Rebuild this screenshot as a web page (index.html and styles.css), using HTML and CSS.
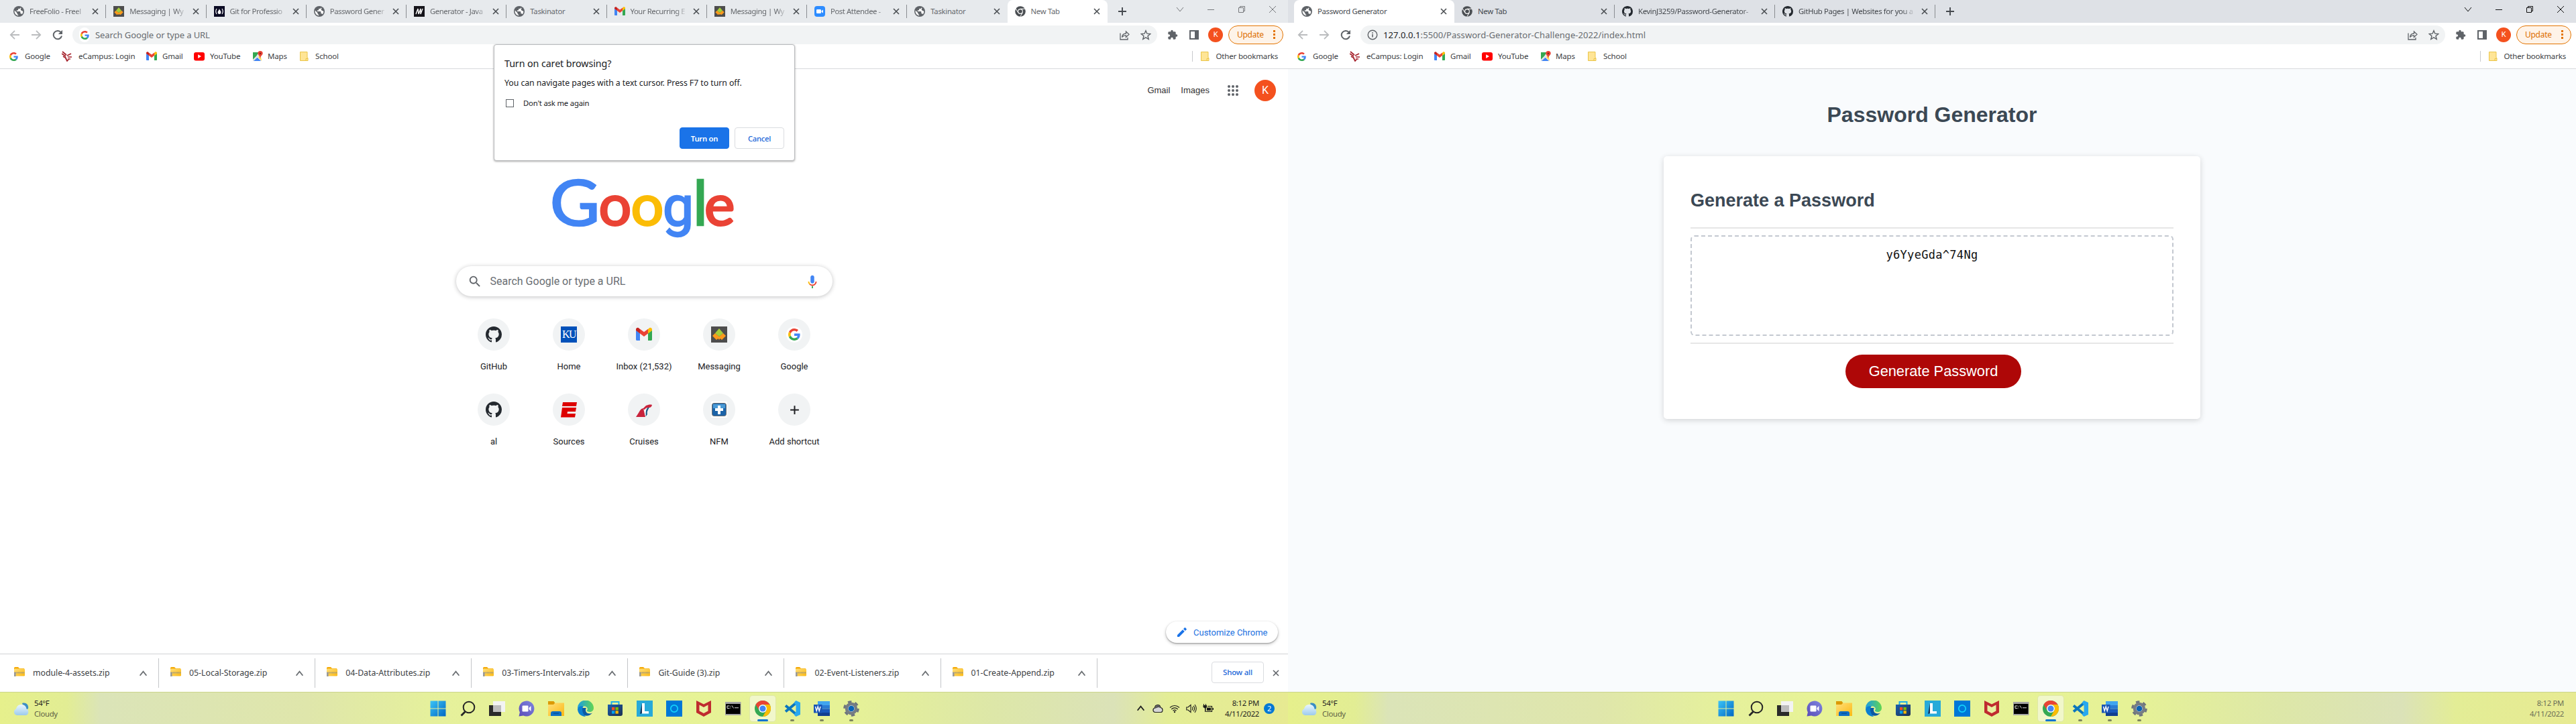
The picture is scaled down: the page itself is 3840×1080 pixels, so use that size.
FILE: index.html
```html
<!DOCTYPE html>
<html lang="en">
<head>
<meta charset="utf-8">
<title>Desktop</title>
<link rel="stylesheet" href="styles.css">
</head>
<body>
<svg class="defs" width="0" height="0" aria-hidden="true">
  <defs>
    <linearGradient id="gw" x1="0" y1="0" x2="1" y2="1"><stop offset="0" stop-color="#3cc4f7"/><stop offset="1" stop-color="#0067c5"/></linearGradient>
    <linearGradient id="gf" x1="0" y1="0" x2="1" y2="1"><stop offset="0" stop-color="#ffdf7a"/><stop offset="1" stop-color="#fbb914"/></linearGradient>
    <linearGradient id="gp" x1="1" y1="0" x2="0" y2="1"><stop offset="0" stop-color="#7f86e0"/><stop offset="1" stop-color="#5a4bb8"/></linearGradient>
    <linearGradient id="gs" x1="0" y1="0" x2="1" y2="1"><stop offset="0" stop-color="#1a5fae"/><stop offset="1" stop-color="#1d3050"/></linearGradient>
    <linearGradient id="ge" x1="0" y1="0" x2="1" y2="0"><stop offset="0" stop-color="#1b9de2"/><stop offset="1" stop-color="#62d651"/></linearGradient>
    <linearGradient id="gc" x1="0" y1="0" x2="0" y2="1"><stop offset="0" stop-color="#eaf6ff"/><stop offset="1" stop-color="#9ccbec"/></linearGradient>
  </defs>
  <symbol id="globe" viewBox="2 2 20 20"><circle cx="12" cy="12" r="10" fill="#5f6368"/><path fill="#fff" d="M11 19.9C7 19.400 4 16 4 12c0-.6.1-1.200.2-1.800L9 15v1c0 1.100.9 2 2 2zM17.900 17.400c-.3-.8-1-1.400-1.900-1.400h-1v-3c0-.5-.4-1-1-1H8v-2h2c.6 0 1-.4 1-1V7h2c1.100 0 2-.9 2-2l1.500.7c-1 2-1.500 3-.5 4s3 1 3.900 2.300c0 2-.8 4-2 5.400z"/></symbol>
  <symbol id="github" viewBox="0 0 16 16"><path fill="#24292f" d="M8 0C3.580 0 0 3.580 0 8c0 3.540 2.290 6.530 5.470 7.590.4.07.55-.17.55-.38 0-.19-.01-.82-.01-1.490-2.010.37-2.530-.49-2.690-.94-.09-.23-.48-.94-.82-1.130-.28-.15-.68-.52-.01-.53.63-.01 1.080.58 1.230.82.72 1.210 1.870.87 2.330.66.07-.52.28-.87.51-1.070-1.780-.2-3.640-.89-3.640-3.950 0-.87.31-1.590.82-2.150-.08-.2-.36-1.020.08-2.120 0 0 .67-.21 2.200.82.64-.18 1.320-.27 2-.27s1.360.09 2 .27c1.530-1.040 2.200-.82 2.200-.82.44 1.100.16 1.920.08 2.120.51.56.82 1.270.82 2.150 0 3.070-1.870 3.750-3.650 3.950.29.25.54.73.54 1.480 0 1.070-.01 1.930-.01 2.200 0 .21.15.46.55.38A8.010 8.010 0 0016 8c0-4.420-3.580-8-8-8z"/></symbol>
  <symbol id="google" viewBox="0 0 48 48"><path fill="#EA4335" d="M24 9.500c3.540 0 6.710 1.220 9.210 3.600l6.850-6.850C35.900 2.380 30.470 0 24 0 14.620 0 6.510 5.380 2.560 13.220l7.980 6.190C12.430 13.720 17.740 9.500 24 9.500z"/><path fill="#4285F4" d="M46.980 24.550c0-1.570-.15-3.090-.38-4.550H24v9.020h12.940c-.58 2.960-2.260 5.480-4.780 7.180l7.730 6c4.510-4.180 7.090-10.360 7.090-17.650z"/><path fill="#FBBC05" d="M10.530 28.590c-.48-1.450-.76-2.990-.76-4.590s.27-3.140.76-4.590l-7.980-6.190C.92 16.460 0 20.120 0 24s.92 7.540 2.560 10.780l7.970-6.190z"/><path fill="#34A853" d="M24 48c6.480 0 11.930-2.130 15.890-5.810l-7.730-6c-2.150 1.450-4.920 2.300-8.160 2.300-6.260 0-11.570-4.220-13.470-9.910l-7.980 6.190C6.510 42.620 14.620 48 24 48z"/></symbol>
  <symbol id="gmail" viewBox="0 0 24 24"><path fill="#4285f4" d="M1.500 21H6V10L0 5.800v13.700c0 .8.700 1.500 1.500 1.500z"/><path fill="#34a853" d="M18 21h4.500c.8 0 1.500-.7 1.500-1.500V5.800L18 10z"/><path fill="#fbbc04" d="M18 4v6.500l6-4.500V4.500C24 2.300 21.400 1 19.600 2.400z"/><path fill="#ea4335" d="M6 10.500V3.800l6 4.500 6-4.500v6.700L12 15z"/><path fill="#c5221f" d="M0 4.500V6l6 4.500V4L4.400 2.400C2.600 1 0 2.300 0 4.500z"/></symbol>
  <symbol id="wyzant" viewBox="0 0 24 24"><path fill="#4d4d4d" d="M0 0h24v24H0z"/><path fill="#fb9a1c" d="M2 14l4-4 6 5 6-5 4 4-6 6-2.500-2L12 20l-1.500-2L8 20z"/><path fill="#a6ce39" d="M12 3l6 7-6 5-6-5z"/></symbol>
  <symbol id="fcc" viewBox="0 0 16 16"><path fill="#0a0a23" d="M0 0h16v16H0z"/><path d="M4 4Q1.500 8 4 12M12 4q2.500 4 0 8" fill="none" stroke="#fff" stroke-width="1.200"/><path fill="#fff" d="M8 4c0 2 2.500 3 2.500 5.500Q10.300 12 8 12t-2.500-2.500C5.500 8 7 7 8 4z"/></symbol>
  <symbol id="mdn" viewBox="0 0 16 16"><path fill="#15141a" d="M0 0h16v16H0z"/><path d="M3 12L6 4l1 8 3-8v8l3-8" fill="none" stroke="#fff" stroke-width="1.400"/></symbol>
  <symbol id="zoomcam" viewBox="0 0 16 16"><rect width="16" height="16" rx="4" fill="#2d8cff"/><rect x="3" y="5" width="7" height="6" rx="1.300" fill="#fff"/><path fill="#fff" d="M10.600 7.200L13 5.500v5l-2.400-1.700z"/></symbol>
  <symbol id="chromegray" viewBox="0 0 16 16"><circle cx="8" cy="8" r="7.800" fill="#4a4e52"/><circle cx="8" cy="8" r="3.900" fill="#fff"/><circle cx="8" cy="8" r="2.800" fill="#4a4e52"/><path d="M8 4.200h7M4.700 9.900L1.300 4M11.300 9.900L8 15.600" stroke="#fff"/></symbol>
  <symbol id="chrome" viewBox="0 0 24 24"><circle cx="12" cy="12" r="12" fill="#34a853"/><path fill="#ea4335" d="M1.600 6A12 12 0 0122.400 6H12a6 6 0 00-5.200 9z"/><path fill="#fbbc05" d="M22.400 6A12 12 0 0112 24l5.200-9A6 6 0 0012 6z"/><circle cx="12" cy="12" r="6" fill="#fff"/><circle cx="12" cy="12" r="4.600" fill="#4285f4"/></symbol>
  <symbol id="x" viewBox="0 0 16 16"><path d="M4 4l8 8M12 4l-8 8" stroke="currentColor" stroke-width="1.600"/></symbol>
  <symbol id="plus" viewBox="0 0 16 16"><path d="M8 2v12M2 8h12" stroke="currentColor" stroke-width="1.900"/></symbol>
  <symbol id="back" viewBox="0 0 16 16"><path d="M15 8H2M8 1.800L1.800 8 8 14.200" fill="none" stroke="#babcbe" stroke-width="1.800"/></symbol>
  <symbol id="fwd" viewBox="0 0 16 16"><path d="M1 8h13M8 1.800L14.200 8 8 14.200" fill="none" stroke="#babcbe" stroke-width="1.800"/></symbol>
  <symbol id="reload" viewBox="0 0 16 16"><path d="M13 4.500A6.200 6.200 0 1014 9.500" fill="none" stroke="#5f6368" stroke-width="2"/><path fill="#5f6368" d="M15 .8v6.200H8.800z"/></symbol>
  <symbol id="info" viewBox="0 0 16 16"><circle cx="8" cy="8" r="6.800" fill="none" stroke="#5f6368" stroke-width="1.400"/><path d="M8 7v4.500M8 4.300v1.600" stroke="#5f6368" stroke-width="1.600"/></symbol>
  <symbol id="share" viewBox="0 0 16 16"><path d="M2 5.500v9.500h11v-3M4.500 11.500C5 7.500 7.500 6 10.500 6V3l4.500 4.300-4.500 4.200V8.800c-3 0-4.700.9-6 2.700z" fill="none" stroke="#5f6368" stroke-width="1.300"/></symbol>
  <symbol id="star" viewBox="0 0 16 16"><path d="M8 1.700l1.900 4.500 4.800.4-3.700 3.100 1.200 4.800L8 11.900l-4.200 2.600L5 9.700 1.300 6.600l4.800-.4z" fill="none" stroke="#5f6368" stroke-width="1.400"/></symbol>
  <symbol id="puzzle" viewBox="0 0 24 24"><path fill="#5f6368" d="M20.500 11H19V7c0-1.100-.9-2-2-2h-4V3.500a2.500 2.500 0 00-5 0V5H4c-1.100 0-2 .9-2 2v3.800h1.500a2.700 2.700 0 010 5.400H2V20c0 1.100.9 2 2 2h3.800v-1.500a2.700 2.700 0 015.400 0V22H17c1.100 0 2-.9 2-2v-4h1.500a2.500 2.500 0 000-5z"/></symbol>
  <symbol id="panel" viewBox="0 0 16 16"><path fill="#5f6368" fill-rule="evenodd" d="M1 1h14v14H1zM3 3v10h6V3z"/></symbol>
  <symbol id="eagle" viewBox="0 0 16 16"><path d="M1 1l6 5M0 4l6 4M2 8l5 3M8 7l6-3M9 9h6M9 12h4M5 9l3 6 2-2" fill="none" stroke="#a5222c" stroke-width="1.700"/></symbol>
  <symbol id="youtube" viewBox="0 0 16 16"><rect x="0" y="2" width="16" height="12.500" rx="3" fill="#f00"/><path fill="#fff" d="M6.200 5.300v5.600L11 8.100z"/></symbol>
  <symbol id="maps" viewBox="0 0 16 16"><path fill="#34a853" d="M1 2h9l-4 6-5 5z"/><path fill="#fbd75b" d="M10 6l3 3 1 6-5-5z"/><path fill="#4285f4" d="M1 15l6-6 6 6z"/><path fill="#dfe3e6" d="M1 13L11 3l2 2-11 10H1z"/><path fill="#ea4335" d="M12 0a3.700 3.700 0 013.700 3.700C15.700 6 12.500 7 12 11 11.500 7 8.300 6 8.300 3.700A3.700 3.700 0 0112 0z"/><circle cx="12" cy="3.700" r="1.300" fill="#8c1d18"/></symbol>
  <symbol id="folder" viewBox="0 0 16 16"><path d="M2.500 1.500h10.500v9h1v4H2.500z" fill="#ffe596" stroke="#eac54a"/><path d="M11 14.500v-3h2.500" fill="none" stroke="#eac54a"/></symbol>
  <symbol id="wmin" viewBox="0 0 12 12"><path d="M1 6.500h10" stroke="currentColor"/></symbol>
  <symbol id="wres" viewBox="0 0 12 12"><path d="M1.500 3.500h7v7h-7zM3.500 3.500v-2h7v7h-2" fill="none" stroke="currentColor"/></symbol>
  <symbol id="wx" viewBox="0 0 12 12"><path d="M1 1l10 10M11 1L1 11" stroke="currentColor"/></symbol>
  <symbol id="wchev" viewBox="0 0 12 12"><path d="M1 3l5 6 5-6" fill="none" stroke="currentColor"/></symbol>
  <symbol id="up" viewBox="0 0 12 12"><path d="M1.500 9L6 3.500 10.500 9" fill="none" stroke="currentColor" stroke-width="1.700"/></symbol>
  <symbol id="zip" viewBox="0 0 18 16"><path fill="#f5ab0a" d="M1 2.500Q1 1 2.500 1H7l2 2h7v4H1z"/><rect x="1" y="3.500" width="16" height="11" rx="1.200" fill="url(#gf)"/><path d="M1 9.500h15.500" stroke="#97917c" stroke-width="2.200" stroke-dasharray="1.200 .8"/><path fill="#9a9a98" d="M1 9h2.600v6H1z"/></symbol>
  <symbol id="search" viewBox="0 0 24 24"><path fill="currentColor" d="M15.500 14h-.79l-.28-.27A6.470 6.470 0 0016 9.500 6.500 6.500 0 109.500 16c1.610 0 3.090-.59 4.230-1.570l.27.28v.79l5 4.990L20.490 19l-4.990-5zm-6 0C7.010 14 5 11.990 5 9.500S7.010 5 9.500 5 14 7.010 14 9.500 11.990 14 9.500 14z"/></symbol>
  <symbol id="mic" viewBox="0 0 24 24"><path fill="#4285f4" d="M12 15c1.700 0 3-1.300 3-3V5c0-1.700-1.300-3-3-3S9 3.300 9 5v7c0 1.700 1.300 3 3 3z"/><path fill="#34a853" d="M11 19h2v4h-2z"/><path fill="#fbbc05" d="M7 12H5c0 2 .8 3.700 2 5l1.500-1.400C7.500 14.700 7 13.400 7 12z"/><path fill="#ea4335" d="M12 17c-1.400 0-2.600-.5-3.500-1.400L7 17c1.300 1.300 3 2 5 2 3.900 0 7-3.100 7-7h-2c0 2.800-2.200 5-5 5z"/></symbol>
  <symbol id="espn" viewBox="0 0 24 24"><path fill="#d00" d="M3 1h21l-1 6H2zM2 9h21l-1 6H10l-.5 3H22l-1 5.500H0z"/></symbol>
  <symbol id="carnival" viewBox="0 0 24 24"><path fill="#c8243c" d="M0 23c3-4 5-9 8-12l3-1 3 13z"/><path fill="#1b5c86" d="M15 22c-2-6-1-12 6-15-3 5-5 8-4 12z"/><path fill="#c8243c" d="M10 11l5-5c3-1 6-2 9-1-1 4-3 4-5 4-3 0-5 1-6 3z"/><path fill="#fff" d="M13.500 20c-1-5 0-8 3-10-2 3-2 6-2 10z"/></symbol>
  <symbol id="nfm" viewBox="0 0 24 24"><path fill="#fff" d="M0 0h24v24H0z"/><rect x="1" y="2" width="22" height="20" rx="4" fill="#6b7278"/><rect x="2" y="3" width="20" height="18" rx="3" fill="#1b63a8"/><path fill="#4a9ad6" d="M3 4h18v6H3z"/><path fill="#fff" d="M10 6h4v4h4v4h-4v5h-4v-5H6v-4h4z"/></symbol>
  <symbol id="pencil" viewBox="0 0 16 16"><path fill="#1a73e8" d="M1 12.200V15h2.800l8-8L9 4.200zM10 3.200L12.800 6l1.800-1.800c.4-.4.400-.9 0-1.200l-1.600-1.600c-.4-.4-.9-.4-1.200 0z"/></symbol>
  <symbol id="weather" viewBox="0 0 24 20"><path fill="#3b8dc4" d="M13 1c6-2 10 3 9 8l-5 3z"/><path fill="url(#gc)" d="M5 19a5 5 0 01-1-9.500C5 5 8 3 12 3c5 0 7 3 7.500 6.500C24 11 23 19 18 19z"/></symbol>
  <symbol id="win" viewBox="0 0 24 24"><path fill="url(#gw)" d="M.5.500h11v11H.500zM12.500.500h11v11h-11zM.500 12.500h11v11H.500zM12.500 12.500h11v11h-11z"/></symbol>
  <symbol id="tsearch" viewBox="0 0 24 24"><circle cx="14" cy="10" r="8.300" fill="none" stroke="#262626" stroke-width="2"/><path d="M8.500 16.500L2.500 22.500" stroke="#262626" stroke-width="2.800"/></symbol>
  <symbol id="tview" viewBox="0 0 24 24"><path fill="#2a2a2a" d="M0 7h18v16H0z"/><path fill="#f3f3f3" d="M6 1h18v16H6z"/><path fill="#bdbdbd" d="M6 7h12v10H6z"/></symbol>
  <symbol id="chat" viewBox="0 0 24 24"><path fill="url(#gp)" d="M12 .5a11.500 11.500 0 11-4.800 22L.5 23.500l1.400-6A11.500 11.500 0 0112 .5z"/><rect x="5.500" y="7.500" width="9" height="9" rx="1.300" fill="#fff"/><path fill="#fff" d="M15.500 11l3-3v8l-3-3z"/></symbol>
  <symbol id="explorer" viewBox="0 0 24 24"><path fill="#dc9a05" d="M0 1h8.500l2 3L8 7H0z"/><path fill="url(#gf)" d="M0 6h8l2.500-2.500H24V23H0z"/><path fill="#0d6fc4" d="M4 23v-4q0-3 3-3h10q3 0 3 3v4z"/><path fill="#0a4f93" d="M8 18.500h8v1.300H8z"/></symbol>
  <symbol id="edge" viewBox="0 0 24 24"><path fill="#0c59a4" d="M1 11a12 12 0 0021 7.500c-4 2-10 1-10-4.500 0-2 1-3 1-3z"/><path fill="url(#ge)" d="M0 12A12 12 0 0124 11c0 4-3 6-6 6-3.500 0-5-1.500-3.800-2.800C16 12 14 8.500 9.500 8.500 5 8.500 1 11 0 12z"/><path fill="#0b7fd0" d="M0 12.500C1 9 5 7.500 9 8.500 6 11 6 18 12 24 5 24 0 19 0 12.500z"/></symbol>
  <symbol id="store" viewBox="0 0 24 24"><path d="M6.500 7V2h11v5" fill="none" stroke="#1cb0ea" stroke-width="2"/><path fill="url(#gs)" d="M1 6h22v14q0 3-3 3H4q-3 0-3-3z"/><path fill="#f25022" d="M7 10h4.300v4.300H7z"/><path fill="#7fba00" d="M12.500 10h4.300v4.300h-4.300z"/><path fill="#00a4ef" d="M7 15.300h4.300v4.300H7z"/><path fill="#ffb900" d="M12.500 15.300h4.300v4.300h-4.300z"/></symbol>
  <symbol id="lapp" viewBox="0 0 24 24"><path fill="#27aad9" d="M0 0h24v24H0z"/><path fill="#14345c" d="M8 4L5 20l6-2z"/><path fill="#fff" d="M8 4h4v12h6v3.500H8z"/></symbol>
  <symbol id="alexa" viewBox="0 0 24 24"><path fill="#0078d7" d="M0 0h24v24H0z"/><circle cx="12" cy="12" r="5.200" fill="none" stroke="#13d3fb" stroke-width="1.700"/></symbol>
  <symbol id="mcafee" viewBox="0 0 24 24"><path fill="#bf2b2f" d="M1 0l11 5.500L23 0v18l-11 6L1 18z"/><path fill="#e9f1a0" d="M5.500 6.500L12 10l6.500-3.500v9L12 19l-6.500-3.500z"/></symbol>
  <symbol id="cmd" viewBox="0 0 24 24"><path fill="#a5a5a5" d="M0 2h23.500v20H0z"/><path fill="#000" d="M1 5h21.500v15H1z"/><path d="M3 8h3.500M3 8v3.500h3.500M8 8v1M8 10.500v1M10 7.500l2.500 4M14 10.800h6" fill="none" stroke="#ddd"/></symbol>
  <symbol id="vscode" viewBox="0 0 24 24"><path d="M2 7.500L18.500 21M2 16.500L18.500 3" fill="none" stroke="#0b76bd" stroke-width="4"/><path fill="#29a8ee" fill-rule="evenodd" d="M17.500 0L24 3v18l-6.500 3-3-3 3-4.500v-9L14.500 3z"/></symbol>
  <symbol id="word" viewBox="0 0 24 24"><path fill="#41a5ee" d="M6 1h18v6H6z"/><path fill="#2b7cd3" d="M6 7h18v5.500H6z"/><path fill="#185abd" d="M6 12.500h18V18H6z"/><path fill="#103f91" d="M6 18h18v5H6z"/><path fill="#1a56b5" d="M0 6h12.500v12.500H0z"/><path d="M2.500 9l1.700 6.500L6.200 9l2 6.500L10 9" fill="none" stroke="#fff" stroke-width="1.400"/></symbol>
  <symbol id="gear" viewBox="0 0 24 24"><circle cx="12" cy="12" r="9.800" fill="none" stroke="#6e757c" stroke-width="4" stroke-dasharray="5.200 5.060"/><circle cx="12" cy="12" r="7" fill="#dfe7ea" stroke="#767d84" stroke-width="4.500"/><circle cx="12" cy="12" r="4.300" fill="#0a63b5"/></symbol>
  <symbol id="cloud" viewBox="0 0 16 16"><path d="M4 13.500a3.300 3.300 0 01-.5-6.500C4 1.500 11 1 12 6.500c4 .5 4 7 0 7z" fill="#d6d6d6" stroke="#222" stroke-width="1.200"/><path fill="#555" d="M3.500 8C5 1.500 11 2 11.500 7L9 6z"/></symbol>
  <symbol id="wifi" viewBox="0 0 16 16"><path d="M1 6.500q7-6 14 0M3.200 9q4.800-4.200 9.600 0M5.500 11.300q2.500-2.200 5 0" fill="none" stroke="#1b1b1b" stroke-width="1.200"/><circle cx="8" cy="13" r="1.200" fill="#1b1b1b"/></symbol>
  <symbol id="vol" viewBox="0 0 16 16"><path d="M.8 6H3l4-3.500v11L3 10H.8zM9 5.500q1.800 2.500 0 5M11 3.800q3.300 4.200 0 8.400M13 2q4.500 6 0 12" fill="none" stroke="#1b1b1b" stroke-width="1.100"/></symbol>
  <symbol id="batt" viewBox="0 0 16 16"><path fill="#1b1b1b" d="M1 1h1v2h2V1h1v2h1v3L4.500 7.500V13H3V7.500L.5 6V3H1z"/><path d="M7 4.500h6.500v8H5" fill="none" stroke="#1b1b1b" stroke-width="1.200"/><path fill="#1b1b1b" d="M6 6.500h6v4.500H6zM14.500 7H16v3h-1.500z"/></symbol>
</svg>

<main class="desktop">
<!-- left monitor -->
<section class="screen inactive">
  <div class="tabs">
    <div class="tab"><svg><use href="#globe"/></svg><span class="fade">FreeFolio - Freel</span><svg class="cl"><use href="#x"/></svg></div>
    <div class="tab"><svg><use href="#wyzant"/></svg><span class="fade">Messaging | Wy</span><svg class="cl"><use href="#x"/></svg></div>
    <div class="tab"><svg><use href="#fcc"/></svg><span class="fade">Git for Professio</span><svg class="cl"><use href="#x"/></svg></div>
    <div class="tab"><svg><use href="#globe"/></svg><span class="fade">Password Gener</span><svg class="cl"><use href="#x"/></svg></div>
    <div class="tab"><svg><use href="#mdn"/></svg><span class="fade">Generator - Java</span><svg class="cl"><use href="#x"/></svg></div>
    <div class="tab"><svg><use href="#globe"/></svg><span>Taskinator</span><svg class="cl"><use href="#x"/></svg></div>
    <div class="tab"><svg><use href="#gmail"/></svg><span class="fade">Your Recurring E</span><svg class="cl"><use href="#x"/></svg></div>
    <div class="tab"><svg><use href="#wyzant"/></svg><span class="fade">Messaging | Wy</span><svg class="cl"><use href="#x"/></svg></div>
    <div class="tab"><svg><use href="#zoomcam"/></svg><span class="fade">Post Attendee -</span><svg class="cl"><use href="#x"/></svg></div>
    <div class="tab nosep"><svg><use href="#globe"/></svg><span>Taskinator</span><svg class="cl"><use href="#x"/></svg></div>
    <div class="tab on"><svg><use href="#chromegray"/></svg><span>New Tab</span><svg class="cl"><use href="#x"/></svg></div>
    <svg class="newtab"><use href="#plus"/></svg>
    <div class="winctl"><svg><use href="#wchev"/></svg><svg><use href="#wmin"/></svg><svg><use href="#wres"/></svg><svg><use href="#wx"/></svg></div>
  </div>
  <div class="toolbar">
    <svg><use href="#back"/></svg><svg><use href="#fwd"/></svg><svg><use href="#reload"/></svg>
    <div class="omni"><i class="gdot"><svg class="g14"><use href="#google"/></svg></i><span class="url">Search Google or type a URL</span><svg><use href="#share"/></svg><svg><use href="#star"/></svg></div>
    <svg><use href="#puzzle"/></svg><svg><use href="#panel"/></svg><b class="ava">K</b>
    <div class="update">Update<i class="dots"></i></div>
  </div>
  <div class="bookmarks">
    <div class="bm"><svg class="g14"><use href="#google"/></svg>Google</div>
    <div class="bm"><svg><use href="#eagle"/></svg>eCampus: Login</div>
    <div class="bm"><svg><use href="#gmail"/></svg>Gmail</div>
    <div class="bm"><svg><use href="#youtube"/></svg>YouTube</div>
    <div class="bm"><svg><use href="#maps"/></svg>Maps</div>
    <div class="bm"><svg><use href="#folder"/></svg>School</div>
    <div class="bm other"><svg><use href="#folder"/></svg>Other bookmarks</div>
  </div>
  <div class="page ntp">
    <div class="gbar"><span>Gmail</span><span>Images</span>
      <svg class="apps" viewBox="0 0 16 16"><g fill="#5f6368"><circle cx="2" cy="2" r="2"/><circle cx="8" cy="2" r="2"/><circle cx="14" cy="2" r="2"/><circle cx="2" cy="8" r="2"/><circle cx="8" cy="8" r="2"/><circle cx="14" cy="8" r="2"/><circle cx="2" cy="14" r="2"/><circle cx="8" cy="14" r="2"/><circle cx="14" cy="14" r="2"/></g></svg>
      <b class="bigava">K</b></div>
    <svg class="logo" viewBox="0 0 272 92"><text y="69"><tspan class="cb" x="-4" textLength="74" lengthAdjust="spacingAndGlyphs">G</tspan><tspan class="cr low" x="68.500">o</tspan><tspan class="cy low" x="116.500">o</tspan><tspan class="cb tail" x="164">g</tspan><tspan class="cg" x="209">l</tspan><tspan class="cr low" x="226">e</tspan></text></svg>
    <div class="search"><svg><use href="#search"/></svg><span>Search Google or type a URL</span><svg><use href="#mic"/></svg></div>
    <div class="tiles">
      <div class="tile"><i><svg><use href="#github"/></svg></i>GitHub</div>
      <div class="tile"><i><b class="ku">KU</b></i>Home</div>
      <div class="tile"><i><svg><use href="#gmail"/></svg></i>Inbox (21,532)</div>
      <div class="tile"><i><svg><use href="#wyzant"/></svg></i>Messaging</div>
      <div class="tile"><i><b class="gdisc"><svg><use href="#google"/></svg></b></i>Google</div>
      <div class="tile"><i><svg><use href="#github"/></svg></i>al</div>
      <div class="tile"><i><svg><use href="#espn"/></svg></i>Sources</div>
      <div class="tile"><i><svg><use href="#carnival"/></svg></i>Cruises</div>
      <div class="tile"><i><svg><use href="#nfm"/></svg></i>NFM</div>
      <div class="tile"><i><svg class="add"><use href="#plus"/></svg></i>Add shortcut</div>
    </div>
    <div class="customize"><svg><use href="#pencil"/></svg>Customize Chrome</div>
  </div>
  <div class="downloads">
    <div class="dl"><svg><use href="#zip"/></svg><span>module-4-assets.zip</span><svg class="up"><use href="#up"/></svg></div>
    <div class="dl"><svg><use href="#zip"/></svg><span>05-Local-Storage.zip</span><svg class="up"><use href="#up"/></svg></div>
    <div class="dl"><svg><use href="#zip"/></svg><span>04-Data-Attributes.zip</span><svg class="up"><use href="#up"/></svg></div>
    <div class="dl"><svg><use href="#zip"/></svg><span>03-Timers-Intervals.zip</span><svg class="up"><use href="#up"/></svg></div>
    <div class="dl"><svg><use href="#zip"/></svg><span>Git-Guide (3).zip</span><svg class="up"><use href="#up"/></svg></div>
    <div class="dl"><svg><use href="#zip"/></svg><span>02-Event-Listeners.zip</span><svg class="up"><use href="#up"/></svg></div>
    <div class="dl"><svg><use href="#zip"/></svg><span>01-Create-Append.zip</span><svg class="up"><use href="#up"/></svg></div>
    <div class="showall">Show all</div><svg class="dlx"><use href="#x"/></svg>
  </div>
  <div class="taskbar">
    <svg class="wx"><use href="#weather"/></svg><div class="temp"><span>54°F</span><em>Cloudy</em></div>
    <div class="apps-row">
      <i><svg><use href="#win"/></svg></i><i><svg><use href="#tsearch"/></svg></i><i><svg><use href="#tview"/></svg></i><i><svg><use href="#chat"/></svg></i><i><svg><use href="#explorer"/></svg></i><i><svg><use href="#edge"/></svg></i><i><svg><use href="#store"/></svg></i><i><svg><use href="#lapp"/></svg></i><i><svg><use href="#alexa"/></svg></i><i><svg><use href="#mcafee"/></svg></i><i><svg><use href="#cmd"/></svg></i><i class="cur"><svg><use href="#chrome"/></svg></i><i class="run"><svg><use href="#vscode"/></svg></i><i class="run"><svg><use href="#word"/></svg></i><i class="run"><svg><use href="#gear"/></svg></i>
    </div>
    <div class="tray"><svg class="tup"><use href="#up"/></svg><svg><use href="#cloud"/></svg><svg><use href="#wifi"/></svg><svg><use href="#vol"/></svg><svg><use href="#batt"/></svg></div>
    <div class="clock"><span>8:12 PM</span><span>4/11/2022</span></div><b class="notif">2</b>
  </div>
  <div class="dialog">
    <h3>Turn on caret browsing?</h3>
    <p>You can navigate pages with a text cursor. Press F7 to turn off.</p>
    <div class="check"><i></i>Don't ask me again</div>
    <div class="btns"><div class="primary">Turn on</div><div class="second">Cancel</div></div>
  </div>
</section>

<!-- right monitor -->
<section class="screen active">
  <div class="tabs">
    <div class="tab on"><svg><use href="#globe"/></svg><span>Password Generator</span><svg class="cl"><use href="#x"/></svg></div>
    <div class="tab"><svg><use href="#chromegray"/></svg><span>New Tab</span><svg class="cl"><use href="#x"/></svg></div>
    <div class="tab"><svg><use href="#github"/></svg><span class="fade">KevinJ3259/Password-Generator-</span><svg class="cl"><use href="#x"/></svg></div>
    <div class="tab"><svg><use href="#github"/></svg><span class="fade">GitHub Pages | Websites for you a</span><svg class="cl"><use href="#x"/></svg></div>
    <svg class="newtab"><use href="#plus"/></svg>
    <div class="winctl"><svg><use href="#wchev"/></svg><svg><use href="#wmin"/></svg><svg><use href="#wres"/></svg><svg><use href="#wx"/></svg></div>
  </div>
  <div class="toolbar">
    <svg><use href="#back"/></svg><svg><use href="#fwd"/></svg><svg><use href="#reload"/></svg>
    <div class="omni"><svg class="inf"><use href="#info"/></svg><span class="url addr"><b>127.0.0.1</b>:5500/Password-Generator-Challenge-2022/index.html</span><svg><use href="#share"/></svg><svg><use href="#star"/></svg></div>
    <svg><use href="#puzzle"/></svg><svg><use href="#panel"/></svg><b class="ava">K</b>
    <div class="update">Update<i class="dots"></i></div>
  </div>
  <div class="bookmarks">
    <div class="bm"><svg class="g14"><use href="#google"/></svg>Google</div>
    <div class="bm"><svg><use href="#eagle"/></svg>eCampus: Login</div>
    <div class="bm"><svg><use href="#gmail"/></svg>Gmail</div>
    <div class="bm"><svg><use href="#youtube"/></svg>YouTube</div>
    <div class="bm"><svg><use href="#maps"/></svg>Maps</div>
    <div class="bm"><svg><use href="#folder"/></svg>School</div>
    <div class="bm other"><svg><use href="#folder"/></svg>Other bookmarks</div>
  </div>
  <div class="page gen">
    <h1>Password Generator</h1>
    <div class="card">
      <h2>Generate a Password</h2>
      <div class="pwd">y6YyeGda^74Ng</div>
      <div class="rule"></div>
      <div class="genbtn">Generate Password</div>
    </div>
  </div>
  <div class="taskbar">
    <svg class="wx"><use href="#weather"/></svg><div class="temp"><span>54°F</span><em>Cloudy</em></div>
    <div class="apps-row">
      <i><svg><use href="#win"/></svg></i><i><svg><use href="#tsearch"/></svg></i><i><svg><use href="#tview"/></svg></i><i><svg><use href="#chat"/></svg></i><i><svg><use href="#explorer"/></svg></i><i><svg><use href="#edge"/></svg></i><i><svg><use href="#store"/></svg></i><i><svg><use href="#lapp"/></svg></i><i><svg><use href="#alexa"/></svg></i><i><svg><use href="#mcafee"/></svg></i><i><svg><use href="#cmd"/></svg></i><i class="cur"><svg><use href="#chrome"/></svg></i><i class="run"><svg><use href="#vscode"/></svg></i><i class="run"><svg><use href="#word"/></svg></i><i class="run"><svg><use href="#gear"/></svg></i>
    </div>
    <div class="clock dim"><span>8:12 PM</span><span>4/11/2022</span></div>
  </div>
</section>
</main>
</body>
</html>
```
FILE: styles.css
```css
* { box-sizing: border-box; margin: 0; padding: 0; }
body { width: 3840px; height: 1080px; overflow: hidden; background: #fff; font: 11.3px/16px "Noto Sans", "Open Sans", sans-serif; letter-spacing: -0.28px; color: #3c4043; }
i, em { font-style: normal; }
svg { display: block; flex: none; width: 16px; height: 16px; }
.defs { position: absolute; width: 0; height: 0; }
.desktop { display: flex; }
.screen { position: relative; width: 1920px; height: 1080px; display: flex; flex-direction: column; }

/* tab strip */
.tabs { display: flex; align-items: stretch; height: 34px; padding-left: 9px; background: #dee1e6; color: #45494e; }
.inactive .tabs { background: #e7eaed; color: #66696d; }
.tab { display: flex; align-items: center; gap: 8px; width: 239px; padding: 0 8px 0 11px; position: relative; flex: none; }
.inactive .tab { width: 149.25px; }
.tab span { flex: 1; min-width: 0; white-space: nowrap; }
.tab .fade { -webkit-mask-image: linear-gradient(90deg, #000 84%, transparent 103%); mask-image: linear-gradient(90deg, #000 84%, transparent 103%); letter-spacing: -0.42px; }
.active .tab .fade { -webkit-mask-image: linear-gradient(90deg, #000 90%, transparent 101%); mask-image: linear-gradient(90deg, #000 90%, transparent 101%); letter-spacing: -0.35px; }
.tab::after { content: ""; position: absolute; right: 0; top: 7px; width: 1px; height: 20px; background: #8a8d91; }
.tab.on::after, .tab.nosep::after { display: none; }
.tab.on { background: #fff; border-radius: 8px 8px 0 0; }
.cl { color: #4a4e52; }
.newtab { color: #45494e; margin: 9px 0 0 14px; }
.winctl { display: flex; gap: 34px; margin: 8px 17px 0 auto; color: #111; }
.inactive .winctl { color: #77797c; }
.winctl svg { width: 12px; height: 12px; }

/* toolbar */
.toolbar { display: flex; align-items: center; height: 36px; padding-left: 14px; gap: 16px; }
.omni { display: flex; align-items: center; width: 1617px; height: 28px; margin-left: -2px; padding: 0 9px 0 10px; gap: 16px; border-radius: 14px; background: #f1f3f4; font-size: 13px; letter-spacing: -0.1px; color: #686c70; }
.gdot { display: flex; align-items: center; justify-content: center; width: 16px; height: 22px; border-radius: 11px; background: #fff; }
.g14 { width: 13px; height: 13px; }
.url { flex: 1; margin-left: -8px; }
.addr { letter-spacing: .06px; }
.url b { font-weight: 400; color: #202124; }
.omni + svg { margin-left: -1px; }
.ava { width: 22px; height: 22px; margin-left: -3px; border-radius: 50%; background: #f4511e; color: #fff; font: 11px/22px Roboto, sans-serif; text-align: center; }
.update { display: flex; align-items: center; justify-content: space-between; width: 82px; height: 28px; margin-left: -8px; padding: 0 11px 1px 12px; border: 1px solid #e37400; border-radius: 14px; background: #fef3e8; color: #dd6f00; font-size: 12px; }
.dots { width: 3px; height: 15px; background: radial-gradient(circle, #e37400 1.500px, transparent 1.700px) 0 0 / 3px 5px; }
.bookmarks { display: flex; align-items: center; height: 33px; padding: 0 15px 4px 14px; border-bottom: 1px solid #d7d9dc; font-size: 11.5px; letter-spacing: -0.18px; }
.bm { display: flex; align-items: center; gap: 9px; flex: none; white-space: nowrap; }
.bm:nth-child(1) { width: 78px; gap: 10px; }
.bm:nth-child(2) { width: 126px; }
.bm:nth-child(3) { width: 71px; gap: 8px; }
.bm:nth-child(4) { width: 87px; gap: 8px; }
.bm:nth-child(5) { width: 69px; gap: 7px; }
.bm.other { margin-left: auto; padding-left: 10px; border-left: 1px solid #c8cacd; }

/* new tab page */
.page { flex: 1; position: relative; display: flex; flex-direction: column; align-items: center; }
.gbar { display: flex; align-items: center; align-self: stretch; justify-content: flex-end; height: 64px; padding-right: 18px; font: 13px/16px "Liberation Sans", sans-serif; letter-spacing: 0; color: #333; }
.gbar span + span { margin-left: 16px; }
.apps { margin: 0 27px 0 27px; }
.gbar .apps { margin-right: 24px; }
.bigava { width: 32px; height: 32px; border-radius: 50%; background: #f4511e; color: #fff; font: 16px/32px Roboto, sans-serif; text-align: center; }
.logo { width: 272px; height: 92px; margin-top: 100px; overflow: visible; }
.logo text { font: 93px Lato, sans-serif; letter-spacing: 0; stroke-width: 2.500; }
.logo .low { font-size: 86px; stroke-width: 3; }
.logo .tail { font-family: Roboto, sans-serif; font-size: 82px; stroke-width: 2.500; }
.cb { fill: #4285f4; stroke: #4285f4; }
.cr { fill: #ea4335; stroke: #ea4335; }
.cy { fill: #fbbc05; stroke: #fbbc05; }
.cg { fill: #34a853; stroke: #34a853; }
.search { display: flex; align-items: center; width: 561px; height: 45px; margin-top: 38px; padding: 0 18px 0 17px; border-radius: 23px; box-shadow: 0 1px 6px rgba(32,33,36,.28); font: 16px Roboto, sans-serif; letter-spacing: 0; color: #6a6e73; }
.search svg { width: 22px; height: 22px; color: #5f6368; }
.search svg:last-child { width: 24px; }
.search span { flex: 1; padding-left: 12px; }
.tiles { display: grid; grid-template-columns: repeat(5, 112px); grid-auto-rows: 112px; margin-top: 33px; font: 13px/16px Roboto, sans-serif; letter-spacing: 0; color: #202124; }
.tile { display: flex; flex-direction: column; align-items: center; gap: 16px; white-space: nowrap; }
.tile i { display: flex; align-items: center; justify-content: center; width: 48px; height: 48px; border-radius: 50%; background: #f1f3f4; }
.tile svg { width: 24px; height: 24px; }
.tile .add { width: 17px; height: 17px; color: #202124; }
.ku { width: 24px; height: 24px; background: #0051ba; color: #fff; font: 16px/23px "Liberation Serif", serif; letter-spacing: -1.500px; text-align: center; }
.gdisc { display: flex; align-items: center; justify-content: center; width: 24px; height: 24px; border-radius: 50%; background: #fff; }
.gdisc svg { width: 18px; height: 18px; }
.customize { position: absolute; right: 15px; bottom: 16px; display: flex; align-items: center; gap: 9px; width: 167px; height: 32px; padding-left: 16px; border-radius: 16px; background: #fff; box-shadow: 0 1px 2px rgba(0,0,0,.3), 0 2px 5px rgba(0,0,0,.2); color: #1a6fe0; font: 13px Roboto, sans-serif; letter-spacing: 0; white-space: nowrap; }

/* downloads shelf */
.downloads { display: flex; height: 57px; border-top: 1px solid #d0d2d5; padding: 6px 10px 6px 4px; background: #fff; font-size: 12.300px; letter-spacing: -0.02px; }
.dl { display: flex; align-items: center; width: 233.100px; padding: 0 16px 0 16px; border-right: 1px solid #c4c6c9; }
.dl svg { width: 18px; height: 16px; margin-top: -4px; }
.dl span { flex: 1; padding-left: 11px; white-space: nowrap; }
.dl .up { width: 13px; height: 13px; color: #6b6f73; margin-top: 0; }
.showall { width: 78px; height: 32px; margin: 5px 0 0 auto; border: 1px solid #dadce0; border-radius: 4px; color: #1a66d8; font-weight: 500; line-height: 30px; text-align: center; font-size: 11.500px; letter-spacing: -0.2px; }
.dlx { margin: 14px 0 0 10px; color: #5f6368; }

/* taskbar */
.taskbar { position: relative; display: flex; align-items: center; height: 48px; padding-left: 20px; border-top: 1px solid #cbd58c; background: linear-gradient(90deg, #e6f08c 0, #e2ed94 100px, #dbe4b8 150px, #dfe6ab 460px, #e5f09c 640px, #e7f396 800px, #e6f296 1260px, #dde7a8 1480px, #dbe2b8 1660px, #e3ed96 1740px, #e7ea92 1920px); color: #1f1f1f; letter-spacing: -0.3px; }
.wx { width: 24px; height: 20px; margin-top: 2px; }
.temp { display: flex; flex-direction: column; width: 100px; margin-left: 7px; }
.temp em { color: #5c6045; }
.apps-row { display: flex; gap: 6px; margin-left: 482.500px; }
.apps-row i { position: relative; display: flex; align-items: center; justify-content: center; width: 38px; height: 38px; border-radius: 4px; }
.apps-row svg { width: 24px; height: 24px; }
.apps-row .cur { background: #f1f7cb; box-shadow: 0 0 0 1px #dfe8a6; }
.cur::after, .run::after { content: ""; position: absolute; left: 50%; bottom: 0; height: 3px; width: 16px; margin-left: -8px; border-radius: 2px; background: #0a74d0; }
.run::after { width: 6px; margin-left: -3px; background: #7e8560; }
.tray { display: flex; align-items: center; gap: 9px; margin-left: auto; padding-right: 18px; }
.tray svg { width: 16px; height: 16px; }
.tray .tup { width: 13px; height: 13px; margin-right: 2px; }
.clock { display: flex; flex-direction: column; align-items: flex-end; width: 50px; margin-right: 7px; white-space: nowrap; }
.clock.dim { margin: 0 18px 0 auto; color: #6d7058; }
.notif { width: 16px; height: 16px; margin-right: 20px; border-radius: 50%; background: #0078d4; color: #fff; font: 11px/16px "Noto Sans", sans-serif; text-align: center; }

/* caret browsing dialog */
.dialog { position: absolute; left: 736px; top: 66px; width: 449px; height: 174px; padding: 18px 15px 0; border: 1px solid #b9bbbd; border-radius: 4px; background: #fff; box-shadow: 0 1px 3px rgba(0,0,0,.35); color: #202124; }
.dialog h3 { font-size: 14.300px; font-weight: 400; line-height: 20px; letter-spacing: -0.1px; }
.dialog p { margin-top: 10px; font-size: 12.300px; line-height: 18px; letter-spacing: -0.05px; white-space: nowrap; }
.check { display: flex; align-items: center; margin-top: 13px; letter-spacing: -0.18px; }
.check i { width: 12px; height: 12px; margin: 0 14px 0 2px; border: 1.500px solid #5f6368; }
.btns { display: flex; justify-content: flex-end; gap: 8px; margin: 28px 0 0 0; line-height: 31px; text-align: center; }
.btns div { width: 74px; height: 32px; border: 1px solid #dadce0; border-radius: 4px; color: #1a66d8; font-weight: 500; }
.btns .primary { background: #1a73e8; border-color: #1a73e8; color: #fff; font-weight: 600; }

/* password generator */
.gen { background: #f9fbfd; font-family: "Liberation Sans", Arial, sans-serif; letter-spacing: 0; color: #3b4854; }
.gen h1 { margin-top: 50px; font-size: 32px; line-height: 37px; }
.card { width: 800px; height: 392px; margin-top: 43px; padding: 50px 40px 0; border-radius: 5px; background: #fff; box-shadow: 0 2px 8px rgba(0,0,0,.16); }
.card h2 { font-size: 27px; line-height: 32px; height: 58px; border-bottom: 2px solid #e6e6e6; }
.pwd { height: 150px; margin-top: 10px; padding-top: 16px; border: 2px dashed #c3c8d0; border-radius: 6px; color: #111; font: 17px/22px "DejaVu Sans Mono", monospace; letter-spacing: .3px; text-align: center; }
.rule { height: 2px; margin-top: 10px; background: #e6e6e6; }
.genbtn { width: 262px; height: 50px; margin: 16px 0 0 231px; border-radius: 25px; background: #ae0707; color: #fff; font-size: 21.800px; line-height: 49px; text-align: center; }
```
